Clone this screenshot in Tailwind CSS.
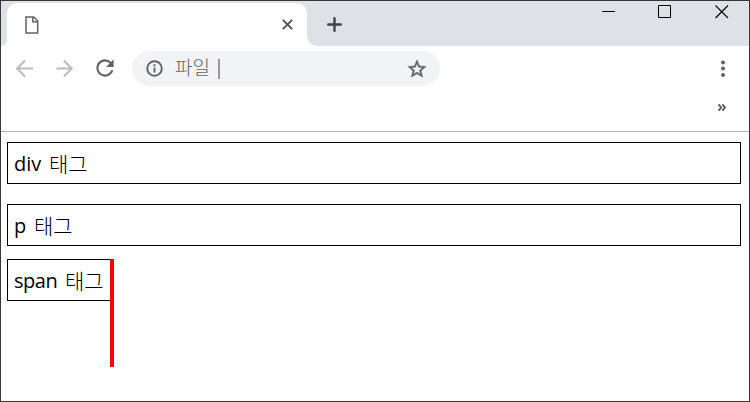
<!doctype html>
<html lang="ko">
  <head>
    <meta charset="UTF-8" />
    <meta name="viewport" content="width=device-width, initial-scale=1.0" />
    <title>Block and inline tags</title>
    <script src="https://cdn.jsdelivr.net/npm/@tailwindcss/browser@4"></script>
  </head>

  <body class="bg-white">
    <div
      class="w-[750px] h-[402px] border border-[#3a3536] overflow-hidden flex flex-col font-['Open_Sans','Noto_Sans_CJK_KR',sans-serif]"
    >
      <!-- Tab strip -->
      <header class="h-[45px] shrink-0 bg-[#dee1e6] flex items-start">
        <div class="w-1.5 h-[45px] shrink-0 bg-white">
          <div class="h-full bg-[#dee1e6] rounded-br-lg"></div>
        </div>
        <div
          class="w-[300px] h-[43px] mt-0.5 shrink-0 bg-white rounded-t-[10px] flex items-center justify-between pl-[18px] pr-[14px]"
        >
          <svg
            class="w-[14px] h-[18px]"
            fill="none"
            stroke="#5f6368"
            stroke-width="1.5"
            viewBox="0 0 14 18"
          >
            <path d="M1 .9h7.8l3.9 3.9v12.2H1z" />
            <path d="M7.8 1v4.7h4.9" />
          </svg>
          <svg
            class="w-[11px] h-[11px]"
            fill="none"
            stroke="#505357"
            stroke-width="1.9"
            viewBox="0 0 11 11"
          >
            <path d="M.8.8l9.4 9.4M10.2.8L.8 10.2" />
          </svg>
        </div>
        <div class="grow h-[45px] bg-white">
          <div class="h-full bg-[#dee1e6] rounded-bl-[10px] flex items-start">
            <svg
              class="w-[15px] h-[15px] ml-5 mt-4"
              stroke="#3f4246"
              stroke-width="2.4"
              stroke-linecap="round"
              viewBox="0 0 15 15"
            >
              <path d="M7.5 1.2v12.6M1.2 7.5h12.6" />
            </svg>
            <div class="ml-auto mr-5 mt-1 flex">
              <svg class="w-[13px] h-[13px]" viewBox="0 0 13 13">
                <path d="M0 6h13v1H0z" />
              </svg>
              <svg
                class="w-[13px] h-[13px] ml-[43px]"
                fill="none"
                stroke="#000"
                viewBox="0 0 13 13"
              >
                <path d="M.5.5h12v12H.5z" />
              </svg>
              <svg
                class="w-[14px] h-[14px] ml-11"
                fill="none"
                stroke="#000"
                stroke-width="1.1"
                viewBox="0 0 14 14"
              >
                <path d="M.5.5l12.5 12.5M13 .5L.5 13" />
              </svg>
            </div>
          </div>
        </div>
      </header>

      <!-- Toolbar -->
      <div
        class="h-[86px] shrink-0 border-b border-[#b3b3b3] pt-[5px] flex flex-col"
      >
        <div class="h-[35px] flex items-center text-[#5f6368]">
          <svg
            class="w-[26px] h-[26px] ml-[11px]"
            fill="none"
            stroke="#babcbe"
            stroke-width="2"
            viewBox="0 0 26 26"
          >
            <path d="M21 12.5H5.6M13 4.5l-8 8 8 8" />
          </svg>
          <svg
            class="w-[26px] h-[26px] ml-3.5"
            fill="none"
            stroke="#babcbe"
            stroke-width="2"
            viewBox="0 0 26 26"
          >
            <path d="M4.5 12.5h15.4M11.8 4.5l8 8-8 8" />
          </svg>
          <svg
            class="w-[26px] h-[26px] ml-3.5 mb-px"
            fill="currentColor"
            viewBox="0 0 24 24"
          >
            <path
              d="M17.65 6.35A7.96 7.96 0 0 0 12 4a8 8 0 1 0 7.73 10h-2.08A6 6 0 1 1 12 6c1.66 0 3.14.69 4.22 1.78L13 11h7V4z"
            />
          </svg>
          <div
            class="w-[308px] h-[35px] ml-3.5 rounded-full bg-[#f1f3f4] flex items-center px-3"
          >
            <svg
              class="w-[21px] h-[21px]"
              fill="none"
              stroke="currentColor"
              stroke-width="1.9"
              viewBox="0 0 21 21"
            >
              <circle cx="10.5" cy="10.5" r="7.3" />
              <path d="M10.5 6.2v2M10.5 9.6v5" />
            </svg>
            <span
              class="ml-2.5 mb-[3px] w-[43px] text-[19px] leading-[20px] font-light whitespace-nowrap font-['Noto_Sans_CJK_KR',sans-serif]"
              >파일</span
            >
            <span class="w-0.5 h-5 bg-[#96989b]"></span>
            <svg
              class="w-[22px] h-[22px] ml-auto"
              fill="currentColor"
              stroke="currentColor"
              stroke-width=".5"
              viewBox="0 0 24 24"
            >
              <path
                d="M22 9.24l-7.19-.62L12 2 9.19 8.63 2 9.24l5.46 4.73L5.82 21 12 17.27 18.18 21l-1.63-7.03zM12 15.4l-3.76 2.27 1-4.28-3.32-2.88 4.38-.38L12 6.1l1.71 4.04 4.38.38-3.32 2.88 1 4.28z"
              />
            </svg>
          </div>
          <svg
            class="w-1 h-[18px] ml-auto mr-6"
            fill="currentColor"
            viewBox="0 0 4 18"
          >
            <circle cx="2" cy="2.4" r="2" />
            <circle cx="2" cy="8.6" r="2" />
            <circle cx="2" cy="14.9" r="2" />
          </svg>
        </div>
        <div class="flex justify-end pt-[18px] pr-[23px]">
          <svg
            class="w-2 h-[7px]"
            fill="none"
            stroke="#5f6368"
            stroke-width="2"
            viewBox="0 0 8 7"
          >
            <path d="M.6.3l2.5 3.2-2.5 3.2M4.4.3l2.5 3.2-2.5 3.2" />
          </svg>
        </div>
      </div>

      <!-- Page -->
      <main class="pt-2.5 pl-1.5 pr-2 text-[20px] leading-[42px] text-black">
        <div class="h-[42px] border border-black pl-1.5 flex">
          <span class="w-[35px] font-[370]">div</span
          ><span class="text-[21px] font-light">태그</span>
        </div>
        <p class="h-[42px] mt-5 border border-black pl-1.5 flex">
          <span class="w-5 font-[370]">p</span
          ><span class="text-[21px] font-light">태그</span>
        </p>
        <div class="mt-[13px] flex items-start">
          <div
            class="w-[103px] h-[42px] border border-r-0 border-black pl-1.5 flex"
          >
            <span class="w-[51px] tracking-[-0.5px] font-[370]">span</span
            ><span class="text-[21px] font-light whitespace-nowrap">태그</span>
          </div>
          <div class="w-1 h-[108px] bg-[#f00]"></div>
        </div>
      </main>
    </div>
  </body>
</html>
